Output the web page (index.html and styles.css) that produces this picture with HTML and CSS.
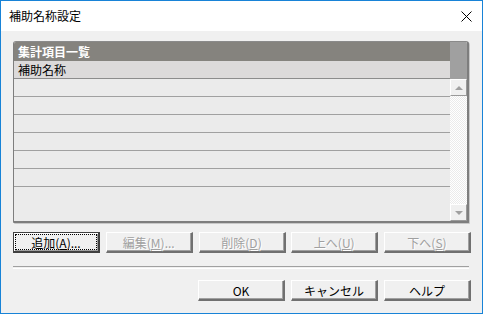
FILE: index.html
```html
<!DOCTYPE html>
<html lang="ja">
<head>
    <meta charset="UTF-8">
    <title>補助名称設定</title>
    <link rel="stylesheet" href="styles.css">
</head>
<body>
    <div class="window">
        <div class="titlebar">
            <span class="title">補助名称設定</span>
            <svg class="close" width="11" height="11" viewBox="0 0 11 11">
                <path d="M0.5 0.5 L10.5 10.5 M10.5 0.5 L0.5 10.5" stroke="#000" stroke-width="1"/>
            </svg>
        </div>
        <div class="content">
            <div class="listbox">
                <div class="rows">
                    <div class="list-header">集計項目一覧</div>
                    <div class="row selected">補助名称</div>
                    <div class="row"></div>
                    <div class="row"></div>
                    <div class="row"></div>
                    <div class="row"></div>
                    <div class="row"></div>
                    <div class="row"></div>
                    <div class="row last"></div>
                </div>
                <div class="scrollbar">
                    <div class="scroll-top"></div>
                    <div class="scroll-btn"><span class="arrow up"></span></div>
                    <div class="scroll-track"></div>
                    <div class="scroll-btn"><span class="arrow down"></span></div>
                </div>
            </div>

            <div class="action-row">
                <button class="btn default"><span class="focus">追加(<u>A</u>)...</span></button>
                <button class="btn" disabled>編集(<u>M</u>)...</button>
                <button class="btn" disabled>削除(<u>D</u>)</button>
                <button class="btn" disabled>上へ(<u>U</u>)</button>
                <button class="btn" disabled>下へ(<u>S</u>)</button>
            </div>

            <div class="separator"></div>

            <div class="dialog-row">
                <button class="btn">OK</button>
                <button class="btn">キャンセル</button>
                <button class="btn">ヘルプ</button>
            </div>
        </div>
    </div>
</body>
</html>
```

FILE: styles.css
```css
html, body {
    margin: 0;
    padding: 0;
}
body {
    width: 483px;
    height: 314px;
    font-family: "Noto Sans CJK JP", "Liberation Sans", sans-serif;
    font-size: 12px;
    color: #000;
}
.window {
    width: 483px;
    height: 314px;
    box-sizing: border-box;
    border: 1px solid #1883d7;
    background-color: #f0f0f0;
}
.titlebar {
    height: 30px;
    background-color: #fff;
    display: flex;
    align-items: center;
    justify-content: space-between;
    padding: 0 10px 0 8px;
}
.title {
    font-size: 12px;
    line-height: 14px;
    color: #000;
}
.close {
    display: block;
}
.content {
    padding: 10px 11px 0 12px;
}
.listbox {
    display: flex;
    width: 456px;
    height: 182px;
    box-sizing: border-box;
    border-top: 1px solid #8a8a8a;
    border-left: 1px solid #7e7e7e;
    border-right: 2px solid #7e7e7e;
    border-bottom: 2px solid #7e7e7e;
    border-radius: 3px 3px 1px 1px;
    background-color: #ebebeb;
    overflow: hidden;
    box-shadow: 1px 1px 0 #c8c8c8;
}
.rows {
    flex: 1;
}
.list-header {
    height: 19px;
    line-height: 19px;
    background-color: #85837e;
    color: #fff;
    font-weight: bold;
    padding-left: 4px;
}
.row {
    height: 17px;
    line-height: 17px;
    border-bottom: 1px solid #a0a0a0;
    padding-left: 4px;
}
.row.selected {
    background-color: #dcdada;
    border-bottom: 1px solid #8c8c8c;
}
.row.last {
    border-bottom: none;
}
.scrollbar {
    width: 17px;
    display: flex;
    flex-direction: column;
}
.scroll-top {
    height: 37px;
    background-color: #a0a0a0;
}
.scroll-btn {
    height: 17px;
    box-sizing: border-box;
    background-color: #f0f0f0;
    border-top: 1px solid #fff;
    border-left: 1px solid #fff;
    border-right: 1px solid #9a9a9a;
    border-bottom: 1px solid #9a9a9a;
    display: flex;
    align-items: center;
    justify-content: center;
}
.scroll-track {
    flex: 1;
    background: repeating-conic-gradient(#fff 0 25%, #ebebeb 0 50%) 0 0 / 2px 2px;
}
.arrow {
    width: 0;
    height: 0;
    border-left: 4px solid transparent;
    border-right: 4px solid transparent;
}
.arrow.up {
    border-bottom: 4px solid #a0a0a0;
}
.arrow.down {
    border-top: 4px solid #a0a0a0;
}
.action-row {
    display: flex;
    justify-content: space-between;
    width: 458px;
    margin-top: 9px;
}
.btn {
    width: 87px;
    height: 21px;
    box-sizing: border-box;
    margin: 0;
    padding: 0;
    font-family: inherit;
    font-size: 12px;
    line-height: 15px;
    color: #000;
    background-color: #f0f0f0;
    border-top: 1px solid #fff;
    border-left: 1px solid #fff;
    border-right: 2px solid #707070;
    border-bottom: 2px solid #707070;
    border-radius: 0;
    box-shadow: inset -1px -1px 0 #a0a0a0;
    display: flex;
    align-items: center;
    justify-content: center;
}
.btn:disabled {
    color: #a0a0a0;
    text-shadow: 1px 1px 0 #fff;
}
.btn.default {
    border: 1px solid #404040;
    border-right: 2px solid #404040;
    border-bottom: 2px solid #404040;
    box-shadow: inset 1px 1px 0 #fff, inset -1px -1px 0 #a0a0a0;
    padding: 2px;
}
.focus {
    flex: 1;
    align-self: stretch;
    display: flex;
    align-items: center;
    justify-content: center;
    outline: 1px dotted #000;
}
.separator {
    width: 456px;
    height: 1px;
    margin-top: 13px;
    border-top: 1px solid #a0a0a0;
    border-bottom: 1px solid #fff;
}
.dialog-row {
    display: flex;
    justify-content: flex-end;
    gap: 6px;
    width: 458px;
    margin-top: 11px;
}
```
